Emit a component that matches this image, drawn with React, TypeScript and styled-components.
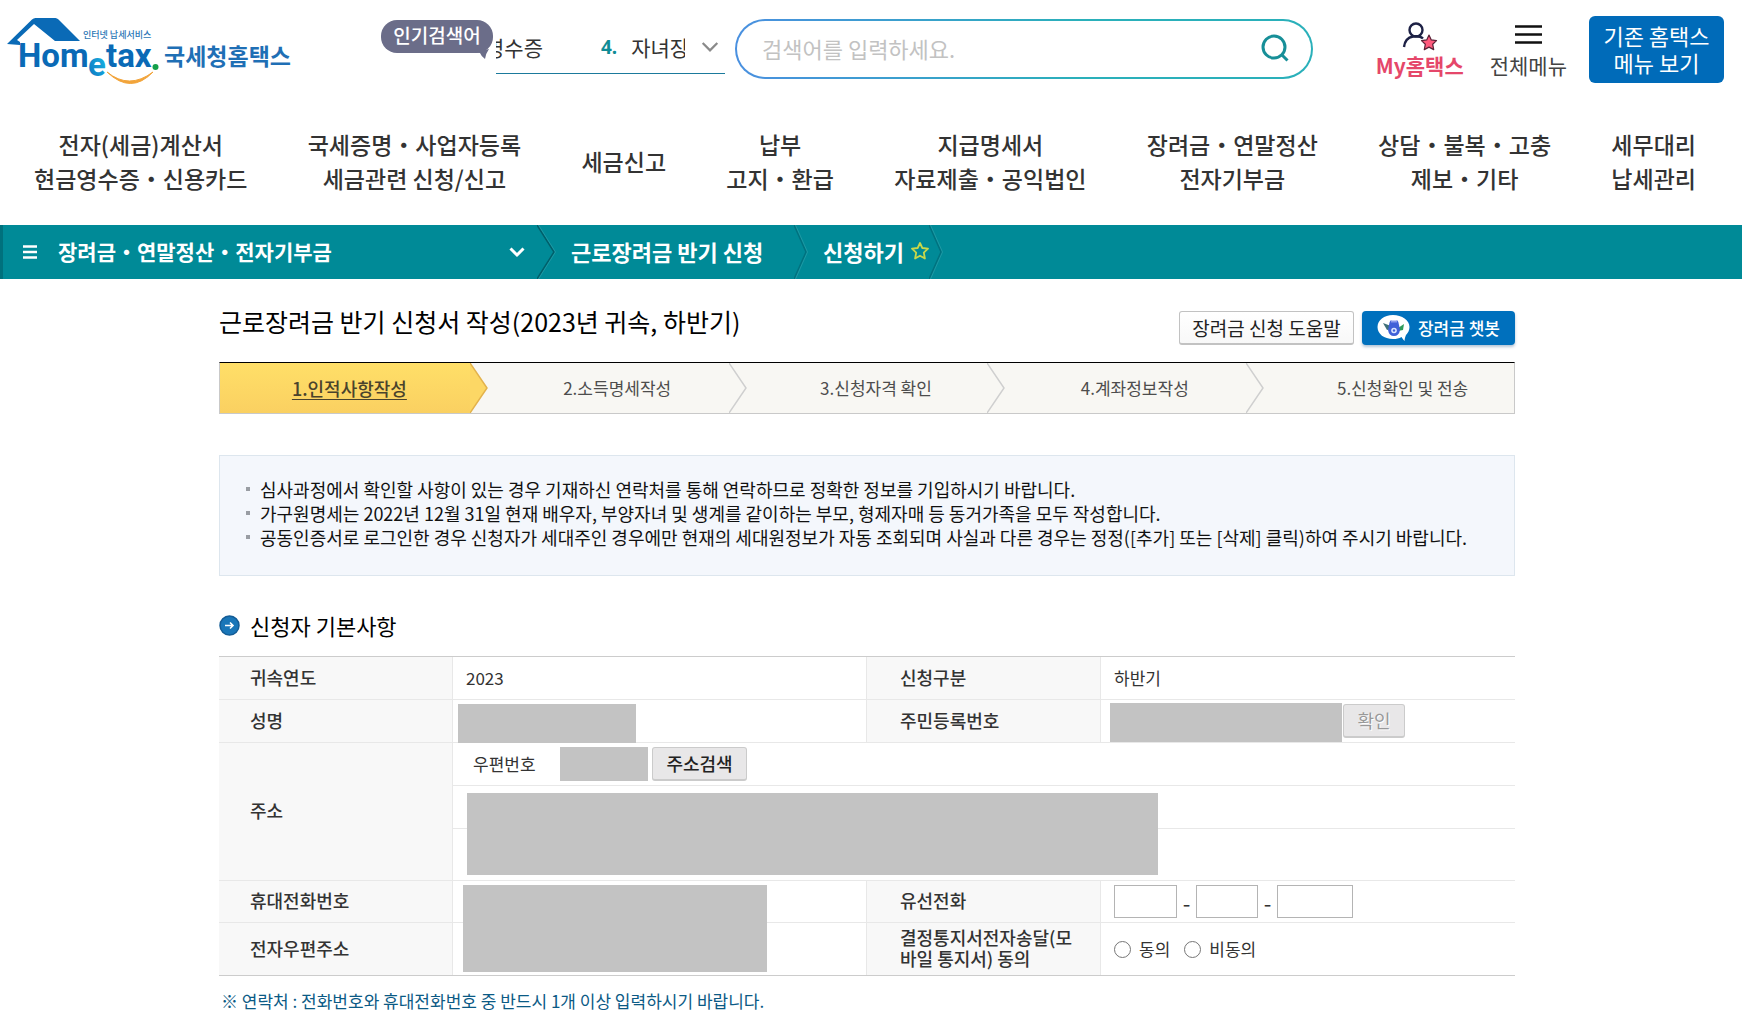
import React from "react";
import styled, { createGlobalStyle } from "styled-components";

const GlobalStyle = createGlobalStyle`
  *, *::before, *::after { box-sizing: border-box; }
  body {
    margin: 0;
    background: #fff;
    color: #333;
    font-family: "Noto Sans CJK KR", "Noto Sans", sans-serif;
    font-size: 17px;
    line-height: 24px;
  }
  button, input { font-family: inherit; }
  h1, h2, p, ul { margin: 0; padding: 0; }
`;

/* ---------- header ---------- */

const Header = styled.header`
  display: flex;
  align-items: flex-start;
  height: 129px;
  padding: 16px 18px 0 7px;
`;

const LogoLink = styled.a`
  display: block;
  flex: none;
  width: 286px;
  height: 68px;
`;

const Popular = styled.div`
  display: flex;
  align-items: flex-start;
  flex: none;
  margin: 4px 10px 0 88px;
`;

const PopularTag = styled.div`
  position: relative;
  width: 112px;
  height: 33px;
  margin-right: 3px;
  border-radius: 16px;
  background: #6b6d89;
  color: #fff;
  font-size: 19px;
  line-height: 30px;
  text-align: center;
  font-weight: 500;
`;

const TagTail = styled.svg`
  position: absolute;
  right: 4px;
  bottom: -6px;
`;

const Ticker = styled.div`
  display: flex;
  align-items: center;
  width: 229px;
  height: 54px;
  border-bottom: 1px solid #1b7a9c;
`;

const TickerWindow = styled.div`
  display: flex;
  justify-content: flex-end;
  flex: none;
  width: 47px;
  overflow: hidden;
  white-space: nowrap;
  font-size: 21px;
  line-height: 32px;
`;

const TickerNext = styled.div`
  display: flex;
  flex: none;
  gap: 14px;
  width: 84px;
  margin-left: 58px;
  overflow: hidden;
  white-space: nowrap;
  font-size: 21px;
  line-height: 32px;
`;

const Rank = styled.span`
  color: #0f8c95;
  font-family: "Noto Sans", sans-serif;
  font-size: 19px;
  font-weight: 700;
`;

const IconButton = styled.button`
  display: flex;
  align-items: center;
  justify-content: center;
  padding: 0;
  border: 0;
  background: transparent;
  cursor: pointer;
`;

const TickerToggle = styled(IconButton)`
  width: 18px;
  margin-left: 16px;
`;

const SearchForm = styled.form`
  display: flex;
  align-items: center;
  flex: 1;
  min-width: 200px;
  height: 60px;
  margin-top: 3px;
  padding: 0 21px 2px 25px;
  border: 2px solid transparent;
  border-radius: 30px;
  background:
    linear-gradient(#fff, #fff) padding-box,
    linear-gradient(90deg, #4a90e0, #2ab0ba 60%, #2ab0ba) border-box;
`;

const SearchInput = styled.input`
  flex: 1;
  min-width: 0;
  height: 40px;
  padding: 0;
  border: 0;
  outline: 0;
  background: transparent;
  font-size: 22px;
  &::placeholder { color: #c2c2c2; opacity: 1; }
`;

const Utilities = styled.nav`
  display: flex;
  align-items: flex-start;
  flex: none;
  margin-left: 63px;
`;

const Utility = styled.a<{ $accent?: boolean }>`
  display: flex;
  flex-direction: column;
  align-items: center;
  margin-right: ${(p) => (p.$accent ? "26px" : "22px")};
  padding-top: 5px;
  color: ${(p) => (p.$accent ? "#e5476a" : "#444")};
  font-size: 21px;
  font-weight: ${(p) => (p.$accent ? 700 : 400)};
  line-height: 28px;
  text-decoration: none;
  svg { display: block; }
`;

const ClassicButton = styled.button`
  width: 135px;
  height: 67px;
  padding: 0 0 2px;
  border: 0;
  border-radius: 6px;
  background: #006bb9;
  color: #fff;
  font-size: 22px;
  line-height: 27px;
  cursor: pointer;
`;

/* ---------- main menu ---------- */

const MainMenu = styled.nav`
  display: flex;
  align-items: center;
  justify-content: space-between;
  height: 96px;
  padding: 0 46px 32px 34px;
`;

const MenuLink = styled.a`
  color: #333;
  font-size: 23px;
  font-weight: 500;
  line-height: 34px;
  text-align: center;
  text-decoration: none;
  white-space: nowrap;
`;

/* ---------- location bar ---------- */

const LocationBar = styled.nav`
  display: flex;
  align-items: center;
  height: 54px;
  border-left: 3px solid #00717d;
  background: #008a97;
  color: #fff;
`;

const LocationMenu = styled.button`
  display: flex;
  align-items: center;
  flex: none;
  width: 534px;
  height: 54px;
  padding: 0 12px 0 20px;
  border: 0;
  background: transparent;
  color: inherit;
  font-size: 21px;
  font-weight: 700;
  cursor: pointer;
`;

const LocationName = styled.span`
  flex: 1;
  margin-left: 21px;
  padding-bottom: 2px;
  text-align: left;
`;

const Crumb = styled.a<{ $width: number }>`
  display: flex;
  align-items: center;
  flex: none;
  gap: 7px;
  width: ${(p) => p.$width}px;
  padding: 0 0 2px 15px;
  color: inherit;
  font-size: 22px;
  font-weight: 700;
  text-decoration: none;
  white-space: nowrap;
`;

const Divider = styled.svg`
  display: block;
  flex: none;
`;

/* ---------- page ---------- */

const Page = styled.main`
  margin: 0 227px 0 219px;
`;

const TitleRow = styled.div`
  display: flex;
  justify-content: space-between;
  padding: 22px 0 14px;
`;

const Title = styled.h1`
  color: #000;
  font-size: 25px;
  font-weight: 400;
  line-height: 40px;
`;

const TitleActions = styled.div`
  display: flex;
  gap: 8px;
  height: 47px;
  padding: 10px 0 3px;
`;

const HelpButton = styled.button`
  width: 175px;
  padding: 0;
  border: 1px solid #c2c2c2;
  border-bottom-width: 2px;
  border-radius: 3px;
  background: linear-gradient(#fff, #f8f8f8);
  color: #222;
  font-size: 19px;
  line-height: 28px;
  cursor: pointer;
`;

const ChatButton = styled.button`
  display: flex;
  align-items: center;
  justify-content: center;
  gap: 8px;
  width: 153px;
  padding: 0;
  border: 0;
  border-radius: 4px;
  background: #0070bd;
  box-shadow: 0 2px 3px rgba(0, 60, 120, 0.3);
  color: #fff;
  font-size: 17px;
  font-weight: 500;
  line-height: 28px;
  cursor: pointer;
`;

const Steps = styled.ol`
  display: grid;
  grid-template-columns: repeat(5, minmax(0, 1fr));
  height: 52px;
  margin: 0;
  padding: 0;
  border: 1px solid #c9c9c9;
  border-top-color: #000;
  background: #f8f7f3;
  list-style: none;
`;

const Step = styled.li<{ $active?: boolean; $last?: boolean }>`
  position: relative;
  display: flex;
  align-items: center;
  justify-content: center;
  padding-left: ${(p) => (p.$active ? "0" : p.$last ? "36px" : "18px")};
  background: ${(p) => (p.$active ? "linear-gradient(#ffdf68, #fad061)" : "transparent")};
  color: ${(p) => (p.$active ? "#4a432c" : "#4d4d4d")};
  font-size: ${(p) => (p.$active ? "18px" : "17px")};
  font-weight: ${(p) => (p.$active ? 500 : 400)};
  text-decoration: ${(p) => (p.$active ? "underline" : "none")};
  text-underline-offset: 3px;
`;

const StepArrow = styled.svg`
  position: absolute;
  top: 0;
  right: -9px;
  z-index: 1;
`;

const Notice = styled.ul`
  margin-top: 41px;
  padding: 21px 26px 26px;
  border: 1px solid #dde6ee;
  background: #f4f7fc;
  color: #111;
  font-size: 18px;
  line-height: 24px;
  list-style: none;
`;

const NoticeItem = styled.li`
  display: flex;
  align-items: center;
  gap: 10px;
  &::before {
    content: "";
    flex: none;
    width: 4px;
    height: 4px;
    background: #999da3;
  }
`;

const SectionTitle = styled.h2`
  display: flex;
  align-items: center;
  gap: 10px;
  margin: 32px 0 14px;
  color: #000;
  font-size: 22px;
  font-weight: 400;
  line-height: 34px;
`;

/* ---------- form table ---------- */

const Table = styled.table`
  width: 100%;
  table-layout: fixed;
  border-collapse: separate;
  border-spacing: 0;
  border-top: 1px solid #ccc;
  border-bottom: 1px solid #ccc;
`;

const LabelCol = styled.col`
  width: 234px;
`;

const Row = styled.tr<{ $height: number }>`
  height: ${(p) => p.$height}px;
  &:not(:last-child) > * { border-bottom: 1px solid #e8e8e8; }
  & > :not(:last-child) { border-right: 1px solid #e8e8e8; }
`;

const Label = styled.th`
  padding: 0 16px 2px 31px;
  background: #f8f8f8;
  color: #333;
  font-size: 18px;
  font-weight: 500;
  line-height: 21px;
  text-align: left;
  word-break: break-all;
  td + & { padding-left: 33px; }
`;

const Cell = styled.td`
  position: relative;
  padding: 0 0 0 13px;
  line-height: 24px;
`;

const Inline = styled.div`
  display: flex;
  align-items: center;
`;

const Mask = styled.span<{ $w: number; $h: number }>`
  display: block;
  flex: none;
  width: ${(p) => p.$w}px;
  height: ${(p) => p.$h}px;
  background: #c3c3c3;
`;

/* Covers several cells at once, so it floats over the grid lines. */
const OverlayMask = styled(Mask)<{ $x: number; $y: number }>`
  position: absolute;
  z-index: 1;
  left: ${(p) => p.$x}px;
  top: ${(p) => p.$y}px;
`;

const FormButton = styled.button<{ $w: number; $before: number }>`
  width: ${(p) => p.$w}px;
  height: 34px;
  margin-left: ${(p) => p.$before}px;
  padding: 0 0 2px;
  border: 1px solid #cbcbcb;
  border-bottom-width: 2px;
  border-radius: 3px;
  background: #e8e7e8;
  color: #222;
  font-size: 18px;
  font-weight: 500;
  line-height: 28px;
  &:disabled { color: #999; font-weight: 400; text-shadow: 1px 1px 0 #fff; }
`;

const ZipLabel = styled.span`
  width: 87px;
  margin-left: 7px;
`;

const PhoneInput = styled.input<{ $w: number }>`
  width: ${(p) => p.$w}px;
  height: 33px;
  padding: 0 6px;
  border: 1px solid #b4b4b4;
  background: #fff;
  font-size: 17px;
`;

const Dash = styled.span`
  width: 19px;
  font-size: 22px;
  text-align: center;
`;

const RadioLabel = styled.label`
  display: flex;
  align-items: center;
  gap: 8px;
  margin-right: 14px;
`;

const Radio = styled.input`
  width: 17px;
  height: 17px;
  margin: 0;
`;

const Footnote = styled.p`
  padding: 11px 0 8px 2px;
  color: #0b5a85;
  font-size: 17px;
  line-height: 28px;
`;

/* ---------- drawings ---------- */

const Logo = () => (
  <svg width="286" height="70" viewBox="7 16 286 70" role="img" aria-label="Hometax 국세청홈택스">
    <defs>
      <linearGradient id="eFill" x1="0" y1="1" x2="1" y2="0">
        <stop offset="0" stopColor="#0a6ebd" />
        <stop offset="1" stopColor="#1cc0e8" />
      </linearGradient>
    </defs>
    <path d="M7 44 32 19.500q1.500-1.500 3.500-1.500h20q1.500 0 3 1.500L80 41H55L34 24 17 40l3 2v3z" fill="#0a6ab6" />
    <g fontFamily="Roboto, 'Liberation Sans', sans-serif" fontWeight="700" fontSize="33">
      <text x="18" y="67" fill="#0a6ab6">Hom</text>
      <text x="88" y="76" fill="url(#eFill)">e</text>
      <text x="106" y="67" fill="#0a6ab6">tax</text>
    </g>
    <circle cx="155.500" cy="67" r="3" fill="#14a04a" />
    <path d="M107 72q22 18 46 0-22 23-46 0z" fill="#f2a43a" stroke="#f2a43a" strokeWidth="1" />
    <g fontFamily="'Noto Sans CJK KR', sans-serif">
      <text x="83" y="38" fontSize="9" fontWeight="500" fill="#2a76b6">인터넷 납세서비스</text>
      <text x="164" y="65" fontSize="23" fontWeight="700" fill="#1f6fb5">국세청홈택스</text>
    </g>
  </svg>
);

const Chevron = ({ color, size, weight }: { color: string; size: number; weight: number }) => (
  <svg width={size} height={size} viewBox="0 0 16 16" fill="none" stroke={color} strokeWidth={weight}>
    <path d="M1.500 4.500 8 11l6.500-6.500" />
  </svg>
);

const CrumbDivider = ({ width, dark }: { width: number; dark?: boolean }) => (
  <Divider width={width} height="54" viewBox={`0 0 ${width} 54`} fill="none">
    <path d={`M0 0 ${width - 2} 27 0 54`} stroke={dark ? "#005f6a" : "#00727f"} strokeWidth="1.500" />
    <path d={`M1.500 0 ${width - 0.5} 27 1.500 54`} stroke="#33a3ad" strokeWidth="0.600" />
  </Divider>
);

const ChatIcon = () => (
  <svg width="33" height="28" viewBox="0 0 33 28">
    <path d="M16 1C7 1 .5 6 .5 13S7 25 16 25c3.500 0 6-.6 8.500-2 1 1.500 2 3 3 4 .3-2.400.6-4 1.500-6 2-2 3.500-5 3.500-8C32.500 6 25 1 16 1z" fill="#fff" />
    <path d="M6 9l8 3v3l-4 1z" fill="#3f6f78" />
    <path d="M27 10l-6 4v3l5-1z" fill="#2f9a5a" />
    <path d="M12 11q0-3 2-5l1 2h4l1-2q2 2 2 5l1 5q-1 6-6 6t-6-6z" fill="#4161d8" />
    <path d="M14 6.500h6v2h-6z" fill="#8c9cec" />
    <circle cx="17" cy="16.500" r="2.800" fill="#dce6ff" />
    <circle cx="17" cy="16.500" r="1.200" fill="#4161d8" />
  </svg>
);

const steps = ["1.인적사항작성", "2.소득명세작성", "3.신청자격 확인", "4.계좌정보작성", "5.신청확인 및 전송"];

const menu: string[][] = [
  ["전자(세금)계산서", "현금영수증・신용카드"],
  ["국세증명・사업자등록", "세금관련 신청/신고"],
  ["세금신고"],
  ["납부", "고지・환급"],
  ["지급명세서", "자료제출・공익법인"],
  ["장려금・연말정산", "전자기부금"],
  ["상담・불복・고충", "제보・기타"],
  ["세무대리", "납세관리"],
];

const notices = [
  "심사과정에서 확인할 사항이 있는 경우 기재하신 연락처를 통해 연락하므로 정확한 정보를 기입하시기 바랍니다.",
  "가구원명세는 2022년 12월 31일 현재 배우자, 부양자녀 및 생계를 같이하는 부모, 형제자매 등 동거가족을 모두 작성합니다.",
  "공동인증서로 로그인한 경우 신청자가 세대주인 경우에만 현재의 세대원정보가 자동 조회되며 사실과 다른 경우는 정정([추가] 또는 [삭제] 클릭)하여 주시기 바랍니다.",
];

export default function App() {
  return (
    <>
      <GlobalStyle />
      <Header>
        <LogoLink href="#"><Logo /></LogoLink>
        <Popular>
          <PopularTag>
            인기검색어
            <TagTail width="14" height="10" viewBox="0 0 14 10"><path d="M0 3 14 0q-3 4-4 10-4-3-5-6z" fill="#6b6d89" /></TagTail>
          </PopularTag>
          <Ticker>
            <TickerWindow>영수증</TickerWindow>
            <TickerNext><Rank>4.</Rank><span>자녀장</span></TickerNext>
            <TickerToggle type="button" aria-label="인기검색어 펼치기"><Chevron color="#8a8a8a" size={18} weight={2} /></TickerToggle>
          </Ticker>
        </Popular>
        <SearchForm onSubmit={(e) => e.preventDefault()}>
          <SearchInput type="text" aria-label="검색어" placeholder="검색어를 입력하세요." />
          <IconButton type="submit" aria-label="검색">
            <svg width="30" height="30" viewBox="0 0 30 30" fill="none" stroke="#178f98" strokeWidth="3">
              <circle cx="14" cy="14" r="11" />
              <path d="m21.500 21.500 6 6" />
            </svg>
          </IconButton>
        </SearchForm>
        <Utilities>
          <Utility href="#" $accent>
            <svg width="36" height="30" viewBox="0 0 36 30" fill="none">
              <circle cx="14" cy="9" r="6.500" stroke="#1d2145" strokeWidth="2.400" />
              <path d="M2 26q1-9 9-10.500 7-1 10 2" stroke="#1d2145" strokeWidth="2.400" />
              <path d="m27 14 2.300 4.900 5.200.7-3.800 3.700 1 5.300-4.700-2.500-4.700 2.500 1-5.300-3.800-3.700 5.200-.7z" fill="#ff5a7d" stroke="#5a2036" strokeWidth="1.200" strokeLinejoin="round" />
            </svg>
            My홈택스
          </Utility>
          <Utility href="#">
            <svg width="28" height="30" viewBox="0 0 28 30" stroke="#111" strokeWidth="2.600">
              <path d="M1 5.500h27M1 13.500h27M1 21.500h27" />
            </svg>
            전체메뉴
          </Utility>
          <ClassicButton type="button">기존 홈택스<br />메뉴 보기</ClassicButton>
        </Utilities>
      </Header>

      <MainMenu>
        {menu.map((lines) => (
          <MenuLink href="#" key={lines[0]}>
            {lines.map((line, i) => (
              <React.Fragment key={line}>{i > 0 && <br />}{line}</React.Fragment>
            ))}
          </MenuLink>
        ))}
      </MainMenu>

      <LocationBar>
        <LocationMenu type="button">
          <svg width="14" height="14" viewBox="0 0 14 14" stroke="#fff" strokeWidth="2.500"><path d="M0 1.500h14M0 7h14M0 12.500h14" /></svg>
          <LocationName>장려금・연말정산・전자기부금</LocationName>
          <Chevron color="#fff" size={16} weight={3} />
        </LocationMenu>
        <CrumbDivider width={19} dark />
        <Crumb href="#" $width={238}>근로장려금 반기 신청</Crumb>
        <CrumbDivider width={14} />
        <Crumb href="#" $width={121}>
          신청하기
          <svg width="18" height="18" viewBox="0 0 18 18" fill="none" stroke="#c9d84a" strokeWidth="1.800" strokeLinejoin="round">
            <path d="m9 1 2.300 5 5.700.7-4.200 3.900 1.100 5.900L9 13.700l-4.900 2.800 1.100-5.900L1 6.700 6.700 6z" />
          </svg>
        </Crumb>
        <CrumbDivider width={14} />
      </LocationBar>

      <Page>
        <TitleRow>
          <Title>근로장려금 반기 신청서 작성(2023년 귀속, 하반기)</Title>
          <TitleActions>
            <HelpButton type="button">장려금 신청 도움말</HelpButton>
            <ChatButton type="button"><ChatIcon />장려금 챗봇</ChatButton>
          </TitleActions>
        </TitleRow>

        <Steps>
          {steps.map((name, i) => (
            <Step key={name} $active={i === 0} $last={i === 4} aria-current={i === 0 ? "step" : undefined}>
              {name}
              {i < 4 && (
                <StepArrow width="18" height="50" viewBox="0 0 18 50">
                  <path d="M0 0h18v50H0z" fill="#f8f7f3" />
                  <path d="M0 0 17 25 0 50z" fill={i === 0 ? "#fcd765" : "#f8f7f3"} />
                  <path d="M0 0 17 25 0 50" fill="none" stroke={i === 0 ? "#e3b24c" : "#cfcfcf"} strokeWidth="1.500" />
                </StepArrow>
              )}
            </Step>
          ))}
        </Steps>

        <Notice>
          {notices.map((text) => <NoticeItem key={text}>{text}</NoticeItem>)}
        </Notice>

        <SectionTitle>
          <svg width="21" height="21" viewBox="0 0 21 21" fill="none">
            <circle cx="10.500" cy="10.500" r="9.500" fill="#1976b8" stroke="#135c96" strokeWidth="1.500" />
            <path d="M6 10.500h8M11 7.500l3 3-3 3" stroke="#fff" strokeWidth="1.600" />
          </svg>
          신청자 기본사항
        </SectionTitle>

        <Table>
          <colgroup>
            <LabelCol />
            <col />
            <LabelCol />
            <col />
          </colgroup>
          <tbody>
            <Row $height={43}>
              <Label scope="row">귀속연도</Label>
              <Cell>2023</Cell>
              <Label scope="row">신청구분</Label>
              <Cell>하반기</Cell>
            </Row>
            <Row $height={43}>
              <Label scope="row">성명</Label>
              <Cell><OverlayMask $w={178} $h={39} $x={5} $y={4} /></Cell>
              <Label scope="row">주민등록번호</Label>
              <Cell>
                <OverlayMask $w={232} $h={39} $x={9} $y={3} />
                <Inline><FormButton type="button" $w={62} $before={229} disabled>확인</FormButton></Inline>
              </Cell>
            </Row>
            <Row $height={43}>
              <Label scope="row" rowSpan={3}>주소</Label>
              <Cell colSpan={3}>
                <Inline>
                  <ZipLabel>우편번호</ZipLabel>
                  <Mask $w={88} $h={34} />
                  <FormButton type="button" $w={95} $before={4}>주소검색</FormButton>
                </Inline>
              </Cell>
            </Row>
            <Row $height={43}>
              <Cell colSpan={3}><OverlayMask $w={691} $h={82} $x={14} $y={7} /></Cell>
            </Row>
            <Row $height={52}>
              <Cell colSpan={3} />
            </Row>
            <Row $height={42}>
              <Label scope="row">휴대전화번호</Label>
              <Cell><OverlayMask $w={304} $h={87} $x={10} $y={4} /></Cell>
              <Label scope="row">유선전화</Label>
              <Cell>
                <Inline>
                  <PhoneInput $w={63} type="text" aria-label="유선전화 지역번호" />
                  <Dash>-</Dash>
                  <PhoneInput $w={62} type="text" aria-label="유선전화 국번" />
                  <Dash>-</Dash>
                  <PhoneInput $w={76} type="text" aria-label="유선전화 번호" />
                </Inline>
              </Cell>
            </Row>
            <Row $height={52}>
              <Label scope="row">전자우편주소</Label>
              <Cell />
              <Label scope="row">결정통지서전자송달(모바일 통지서) 동의</Label>
              <Cell>
                <Inline>
                  <RadioLabel><Radio type="radio" name="notice-consent" />동의</RadioLabel>
                  <RadioLabel><Radio type="radio" name="notice-consent" />비동의</RadioLabel>
                </Inline>
              </Cell>
            </Row>
          </tbody>
        </Table>
        <Footnote>※ 연락처 : 전화번호와 휴대전화번호 중 반드시 1개 이상 입력하시기 바랍니다.</Footnote>
      </Page>
    </>
  );
}
